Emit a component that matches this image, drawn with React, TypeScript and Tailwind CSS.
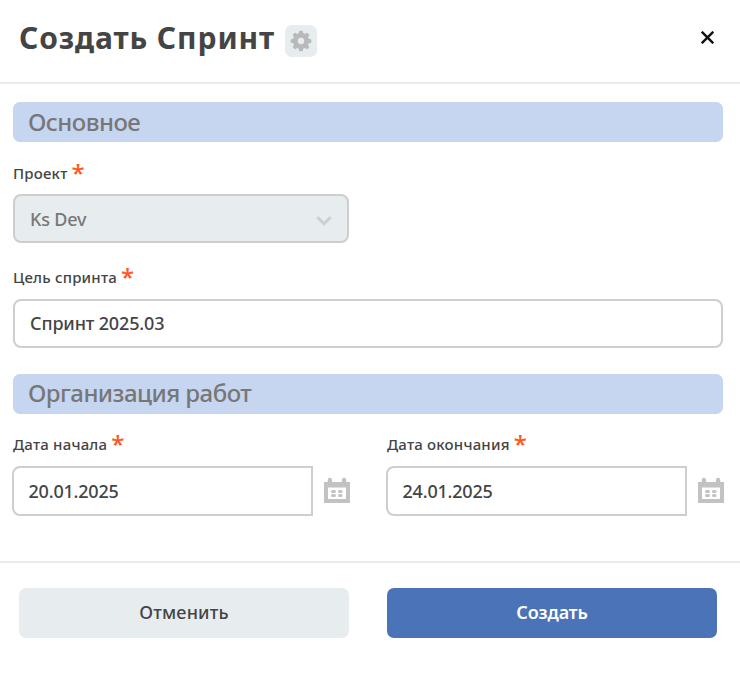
import React from "react";

function Star() {
  return (
    <span className="-mt-[3px] ml-[4px] h-[22px] font-['Open_Sans',sans-serif] text-[24px] leading-[27px] font-semibold tracking-normal text-[#ff5722]">
      *
    </span>
  );
}

function Label({ children }: { children: React.ReactNode }) {
  return (
    <label className="flex h-[22px] items-start text-[15px] leading-[22px] font-[550] tracking-[0.2px] text-[#444]">
      <span>{children}</span>
      <Star />
    </label>
  );
}

function SectionTitle({ children, tight = false }: { children: React.ReactNode; tight?: boolean }) {
  return (
    <h2
      className={`h-10 rounded-[7px] bg-[#c6d5f0] pl-[15px] text-[24px] font-medium tracking-[-0.55px] text-[#777] ${
        tight ? "leading-[38px]" : "leading-[40px]"
      }`}
    >
      {children}
    </h2>
  );
}

function GearIcon() {
  return (
    <svg className="size-[22px]" viewBox="-11 -11 22 22">
      <g fill="#b9b9b9">
        <rect x="-2" y="-10.300" width="4" height="20.600" rx="1.200" />
        <rect x="-2" y="-10.300" width="4" height="20.600" rx="1.200" transform="rotate(45)" />
        <rect x="-2" y="-10.300" width="4" height="20.600" rx="1.200" transform="rotate(90)" />
        <rect x="-2" y="-10.300" width="4" height="20.600" rx="1.200" transform="rotate(135)" />
        <circle r="8.200" />
      </g>
      <circle r="3.200" fill="#e7ecef" />
    </svg>
  );
}

function CalendarIcon() {
  return (
    <svg className="-mt-[2px] ml-[11px] h-[26px] w-[26px] shrink-0" viewBox="0 0 26 26">
      <path
        fill="#c2c2c2"
        fillRule="evenodd"
        d="M0 5h3.700V3a2.200 2.200 0 0 1 4.400 0V5h9.800V3a2.200 2.200 0 0 1 4.400 0V5H26v21H0zM4 10.500v11.500h18V10.500z"
      />
      <g fill="#c2c2c2">
        <rect x="7" y="13" width="5" height="3" rx="1.500" />
        <rect x="14" y="13" width="4.500" height="3" rx="1.500" />
        <rect x="7" y="17" width="5" height="3" rx="1.500" />
        <rect x="14" y="17" width="4.500" height="3" rx="1.500" />
      </g>
    </svg>
  );
}

function DateField({ label, value }: { label: string; value: string }) {
  return (
    <div className="w-[336px]">
      <Label>{label}</Label>
      <div className="mt-[11px] -mr-[2px] -ml-px flex items-center">
        <div className="h-[50px] w-[301px] shrink-0 rounded-l-[8px] border-2 border-[#cecece] pl-[14.500px] text-[18px] leading-[47px] font-medium tracking-[-0.2px] text-[#444]">
          {value}
        </div>
        <CalendarIcon />
      </div>
    </div>
  );
}

export default function App() {
  return (
    <div className="h-[674px] w-[740px] overflow-hidden bg-white font-['Noto_Sans','Open_Sans',sans-serif]">
      <header className="flex h-[84px] items-start border-b-2 border-[#e7ecef] pl-[19px]">
        <h1 className="mt-[18px] w-[256px] text-[30px] leading-[40px] font-bold tracking-[0.88px] whitespace-nowrap text-[#444]">
          Создать Спринт
        </h1>
        <button className="mt-[25px] ml-[10px] flex size-8 items-center justify-center rounded-[7px] bg-[#e7ecef]">
          <GearIcon />
        </button>
        <button className="mt-[31px] mr-[26px] ml-auto">
          <svg className="size-[13px]" viewBox="0 0 13 13" stroke="#111" strokeWidth="2.400">
            <path d="M.7.7l11.600 11.600M12.300.7L.7 12.300" />
          </svg>
        </button>
      </header>
      <main className="h-[477px] pt-[18px] pr-[17px] pl-[13px]">
        <SectionTitle>Основное</SectionTitle>
        <div className="mt-[20px]">
          <Label>Проект</Label>
          <div className="mt-[10px] flex h-[49px] w-[336px] items-center justify-between rounded-[8px] border-2 border-[#cecece] bg-[#e7ecef] pr-[15px] pl-[15px] text-[18px] leading-[45px] font-medium tracking-[-0.2px] text-[#777]">
            <span className="pt-px">Ks Dev</span>
            <svg className="mt-[4px] h-[10px] w-[16px]" viewBox="0 0 16 10" fill="none" stroke="#cecece" strokeWidth="3">
              <path d="M1.500 1.200L8 7.700l6.500-6.500" />
            </svg>
          </div>
        </div>
        <div className="mt-[23px]">
          <Label>Цель спринта</Label>
          <div className="mt-[11px] h-[49px] rounded-[8px] border-2 border-[#cecece] pl-[15px] text-[18px] leading-[45px] font-medium tracking-[-0.15px] text-[#444]">
            Спринт 2025.03
          </div>
        </div>
        <div className="mt-[26px]">
          <SectionTitle tight>Организация работ</SectionTitle>
        </div>
        <div className="mt-[19px] flex gap-[38px]">
          <DateField label="Дата начала" value="20.01.2025" />
          <DateField label="Дата окончания" value="24.01.2025" />
        </div>
      </main>
      <footer className="flex gap-[38px] border-t-2 border-[#e7ecef] pt-[25px] pl-[19px] text-[18px] font-medium">
        <button className="h-[50px] w-[330px] rounded-[7px] bg-[#e7ecef] pb-[2px] tracking-[0.2px] text-[#444]">
          Отменить
        </button>
        <button className="h-[50px] w-[330px] rounded-[7px] bg-[#4b73b7] pb-[2px] font-semibold tracking-[-0.1px] text-white">
          Создать
        </button>
      </footer>
    </div>
  );
}
